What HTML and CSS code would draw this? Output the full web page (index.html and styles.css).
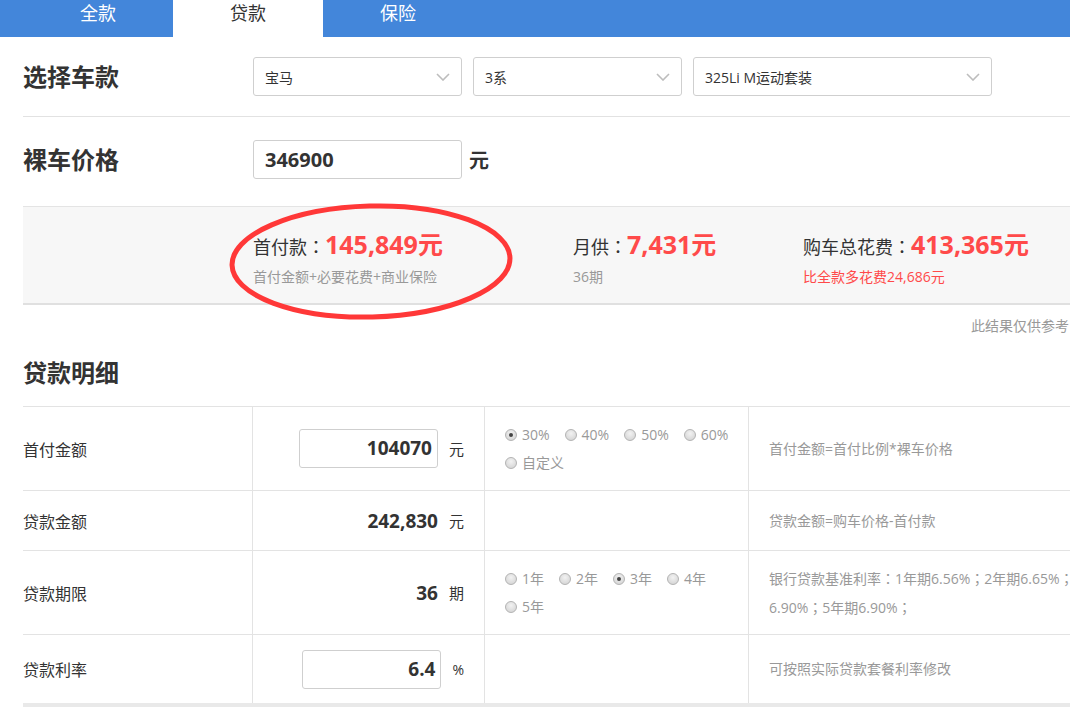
FILE: index.html
```html
<!DOCTYPE html>
<html lang="zh-CN">
<head>
<meta charset="utf-8">
<title>贷款计算器</title>
<link rel="stylesheet" href="styles.css">
</head>
<body>
<nav class="tabs">
  <div class="tab">全款</div>
  <div class="tab tab-active">贷款</div>
  <div class="tab">保险</div>
</nav>

<main class="page">
  <section class="form-row form-row-select">
    <h2 class="row-title">选择车款</h2>
    <div class="select sel-brand"><span>宝马</span><svg class="chev" viewBox="0 0 14 8"><path d="M1 1 L7 7 L13 1" /></svg></div>
    <div class="select sel-series"><span>3系</span><svg class="chev" viewBox="0 0 14 8"><path d="M1 1 L7 7 L13 1" /></svg></div>
    <div class="select sel-model"><span>325Li M运动套装</span><svg class="chev" viewBox="0 0 14 8"><path d="M1 1 L7 7 L13 1" /></svg></div>
  </section>

  <section class="form-row form-row-price">
    <h2 class="row-title">裸车价格</h2>
    <div class="price-box">346900</div>
    <span class="price-unit">元</span>
  </section>

  <section class="summary">
    <div class="sum-item sum-first">
      <div class="sum-main"><span class="sum-label">首付款<span class="punc" lang="zh-TW">：</span></span><span class="sum-value">145,849元</span></div>
      <div class="sum-sub">首付金额+必要花费+商业保险</div>
    </div>
    <div class="sum-item sum-second">
      <div class="sum-main"><span class="sum-label">月供<span class="punc" lang="zh-TW">：</span></span><span class="sum-value">7,431元</span></div>
      <div class="sum-sub">36期</div>
    </div>
    <div class="sum-item">
      <div class="sum-main"><span class="sum-label">购车总花费<span class="punc" lang="zh-TW">：</span></span><span class="sum-value">413,365元</span></div>
      <div class="sum-sub sum-sub-red">比全款多花费24,686元</div>
    </div>
    <svg class="mark" viewBox="0 0 284 117"><ellipse cx="142" cy="58.5" rx="139" ry="55.5" /></svg>
  </section>

  <p class="note">此结果仅供参考</p>

  <h2 class="section-title">贷款明细</h2>

  <div class="detail">
    <div class="d-row d-row-tall">
      <div class="d-label">首付金额</div>
      <div class="d-value"><div class="num-box">104070</div><span class="unit">元</span></div>
      <div class="d-opts">
        <span class="opt"><i class="radio radio-on"></i>30%</span>
        <span class="opt"><i class="radio"></i>40%</span>
        <span class="opt"><i class="radio"></i>50%</span>
        <span class="opt"><i class="radio"></i>60%</span>
        <span class="opt"><i class="radio"></i>自定义</span>
      </div>
      <div class="d-desc"><p class="desc-text">首付金额=首付比例*裸车价格</p></div>
    </div>
    <div class="d-row d-row-short">
      <div class="d-label">贷款金额</div>
      <div class="d-value"><span class="num">242,830</span><span class="unit">元</span></div>
      <div class="d-opts"></div>
      <div class="d-desc"><p class="desc-text">贷款金额=购车价格-首付款</p></div>
    </div>
    <div class="d-row d-row-tall">
      <div class="d-label">贷款期限</div>
      <div class="d-value"><span class="num">36</span><span class="unit">期</span></div>
      <div class="d-opts">
        <span class="opt"><i class="radio"></i>1年</span>
        <span class="opt"><i class="radio"></i>2年</span>
        <span class="opt"><i class="radio radio-on"></i>3年</span>
        <span class="opt"><i class="radio"></i>4年</span>
        <span class="opt"><i class="radio"></i>5年</span>
      </div>
      <div class="d-desc"><p class="desc-text desc-nowrap">银行贷款基准利率<span class="punc" lang="zh-TW">：</span>1年期6.56%<span class="punc" lang="zh-TW">；</span>2年期6.65%<span class="punc" lang="zh-TW">；</span><br>6.90%<span class="punc" lang="zh-TW">；</span>5年期6.90%<span class="punc" lang="zh-TW">；</span></p></div>
    </div>
    <div class="d-row d-row-last">
      <div class="d-label">贷款利率</div>
      <div class="d-value"><div class="num-box">6.4</div><span class="unit unit-pct">%</span></div>
      <div class="d-opts"></div>
      <div class="d-desc"><p class="desc-text">可按照实际贷款套餐利率修改</p></div>
    </div>
  </div>
</main>
</body>
</html>
```

FILE: styles.css
```css
html, body {
  margin: 0;
  padding: 0;
  overflow: hidden;
  background: #fff;
}
body {
  font-family: "Open Sans", "Noto Sans CJK SC", sans-serif;
  color: #333;
  width: 1070px;
  height: 709px;
}

.punc {
  font-family: "Noto Sans CJK TC", sans-serif;
}

/* tabs */
.tabs {
  display: flex;
  height: 37px;
  padding-left: 23px;
  background: #4386da;
}
.tab {
  width: 150px;
  text-align: center;
  font-size: 18px;
  line-height: 26px;
  color: #fff;
}
.tab-active {
  background: #fff;
  color: #333;
}

/* page */
.page {
  margin-left: 23px;
  width: 1050px;
}

.form-row {
  display: flex;
  align-items: center;
}
.form-row-select {
  padding: 20px 0;
  border-bottom: 1px solid #e2e2e2;
}
.form-row-price {
  padding: 23px 0 27px;
}
.row-title {
  margin: 0;
  width: 230px;
  font-size: 24px;
  font-weight: 700;
  line-height: 39px;
  color: #333;
}

.select {
  box-sizing: border-box;
  height: 39px;
  border: 1px solid #cfcfcf;
  border-radius: 3px;
  display: flex;
  align-items: center;
  justify-content: space-between;
  padding: 0 11px 0 11px;
  font-size: 14px;
  color: #333;
}
.sel-brand, .sel-series { width: 209px; margin-right: 11px; }
.sel-model { width: 299px; }
.chev {
  width: 14px;
  height: 8px;
  fill: none;
  stroke: #bdbdbd;
  stroke-width: 1.6;
}

.price-box {
  box-sizing: border-box;
  width: 209px;
  height: 39px;
  border: 1px solid #cfcfcf;
  border-radius: 3px;
  padding-left: 11px;
  font-size: 20px;
  font-weight: 700;
  line-height: 37px;
  color: #333;
}
.price-unit {
  margin-left: 7px;
  font-size: 20px;
  font-weight: 700;
}

/* summary band */
.summary {
  position: relative;
  display: flex;
  background: #f7f7f7;
  border-top: 1px solid #e4e4e4;
  border-bottom: 2px solid #e0e0e0;
  padding: 22px 0 16px 230px;
}
.sum-first { width: 320px; }
.sum-second { width: 230px; }
.sum-main {
  display: flex;
  align-items: baseline;
  height: 30px;
  line-height: 30px;
  white-space: nowrap;
}
.sum-label {
  font-size: 18px;
  color: #333;
}
.sum-value {
  font-size: 25px;
  font-weight: 700;
  color: #ff4a4a;
}
.sum-sub {
  margin-top: 8px;
  height: 20px;
  font-size: 14px;
  line-height: 20px;
  color: #999;
}
.sum-sub-red { color: #ff4a4a; }

.mark {
  position: absolute;
  left: 206px;
  top: -4px;
  width: 284px;
  height: 117px;
  overflow: visible;
  transform: rotate(-1.5deg);
}
.mark ellipse {
  fill: none;
  stroke: #ff3838;
  stroke-width: 5;
}

.note {
  margin: 11px 0 0;
  padding-right: 4px;
  text-align: right;
  font-size: 14px;
  line-height: 20px;
  color: #999;
}

.section-title {
  margin: 20px 0 16px;
  font-size: 24px;
  font-weight: 700;
  line-height: 34px;
  color: #333;
}

/* detail table */
.detail {
  border-top: 1px solid #e3e3e3;
}
.d-row {
  display: grid;
  grid-template-columns: 229px 232px 264px 1fr;
  border-bottom: 1px solid #e3e3e3;
}
.d-row-tall { height: 83px; }
.d-row-short { height: 59px; }
.d-row-last { height: 68px; border-bottom: 4px solid #e9e9e9; }

.d-row > div {
  display: flex;
  align-items: center;
}
.d-label {
  font-size: 16px;
  color: #333;
}
.d-value {
  border-left: 1px solid #e3e3e3;
  justify-content: flex-end;
  gap: 11px;
  padding-right: 20px;
}
.num-box {
  box-sizing: border-box;
  width: 139px;
  height: 39px;
  border: 1px solid #cfcfcf;
  border-radius: 3px;
  padding-right: 5px;
  text-align: right;
  font-size: 19px;
  font-weight: 700;
  line-height: 37px;
  color: #333;
}
.num {
  font-size: 19px;
  font-weight: 700;
  color: #333;
}
.unit {
  font-size: 15px;
  color: #333;
}
.unit-pct { font-size: 14px; }

.d-opts {
  border-left: 1px solid #e3e3e3;
  box-sizing: border-box;
  padding: 0 8px 0 20px;
  flex-wrap: wrap;
  align-content: center;
  column-gap: 15px;
}
.opt {
  display: inline-flex;
  align-items: center;
  font-size: 14px;
  line-height: 28px;
  color: #999;
}
.radio {
  box-sizing: border-box;
  width: 12px;
  height: 12px;
  margin-right: 5px;
  border-radius: 50%;
  border: 1px solid #b3b3b3;
  background: radial-gradient(circle at 50% 35%, #f2f2f2 0%, #dadada 70%, #cfcfcf 100%);
  position: relative;
}
.radio-on::after {
  content: "";
  position: absolute;
  left: 3px;
  top: 3px;
  width: 4px;
  height: 4px;
  border-radius: 50%;
  background: #444;
}

.d-desc {
  border-left: 1px solid #e3e3e3;
  padding-left: 20px;
}
.desc-text {
  margin: 0;
  font-size: 14px;
  line-height: 28px;
  color: #999;
}
.desc-nowrap {
  white-space: nowrap;
}
```
